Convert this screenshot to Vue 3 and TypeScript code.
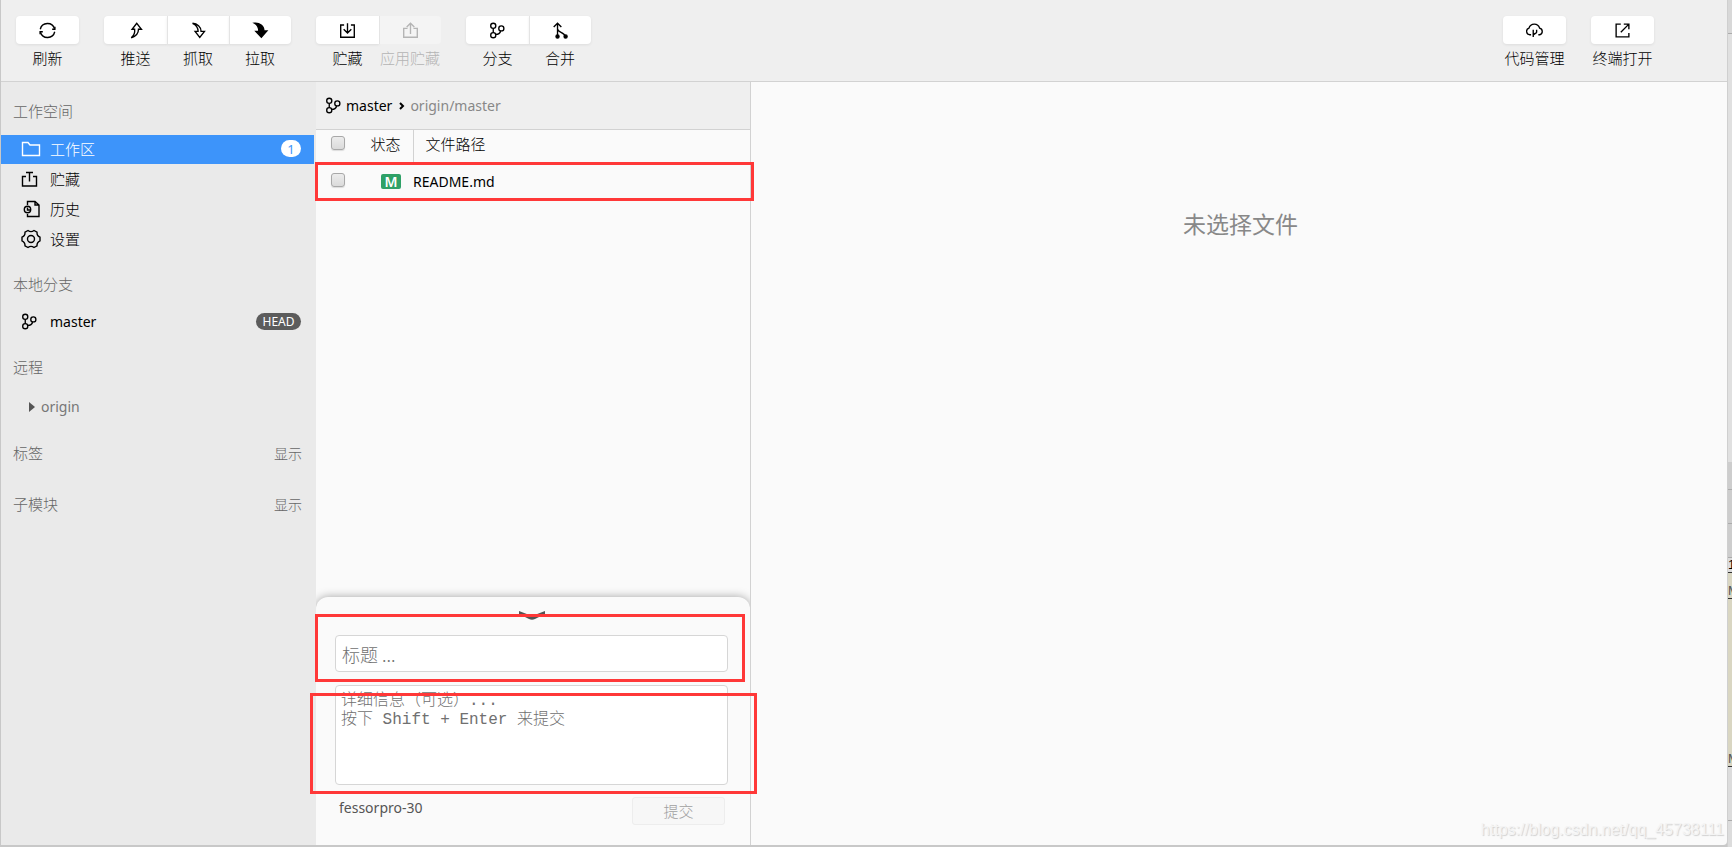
<script setup lang="ts">
import { ref } from 'vue'

interface Tool {
  icon: string
  label: string
  disabled?: boolean
}

const leftTools: Tool[][] = [
  [{ icon: 'refresh', label: '刷新' }],
  [
    { icon: 'push', label: '推送' },
    { icon: 'fetch', label: '抓取' },
    { icon: 'pull', label: '拉取' },
  ],
  [
    { icon: 'stash', label: '贮藏' },
    { icon: 'unstash', label: '应用贮藏', disabled: true },
  ],
  [
    { icon: 'branch', label: '分支' },
    { icon: 'merge', label: '合并' },
  ],
]
const rightTools: Tool[][] = [
  [{ icon: 'cloud', label: '代码管理' }],
  [{ icon: 'external', label: '终端打开' }],
]

const workspace = [
  { icon: 'folder', label: '工作区', count: 1 },
  { icon: 'tray', label: '贮藏', count: 0 },
  { icon: 'history', label: '历史', count: 0 },
  { icon: 'gear', label: '设置', count: 0 },
]
const active = ref('工作区')
const files = [{ status: 'M', path: 'README.md' }]
const title = ref('')
const detail = ref('')
</script>

<template>
  <svg class="sprite" aria-hidden="true">
    <defs>
      <symbol id="refresh" viewBox="0 0 20 20">
        <path d="M1.500 8.500A8.700 8.700 0 0 1 18.300 8M18.500 11.500A8.700 8.700 0 0 1 1.700 12" />
        <path d="M15.500 8.500h3.200V5.500M4.500 11.500H1.300v3" />
      </symbol>
      <symbol id="push" viewBox="0 0 20 20">
        <path d="M11.500 1.500 6 8.500h3c.5 4-1 7.500-4 10 5-1.500 8.500-5 8.500-10H17Z" />
      </symbol>
      <symbol id="fetch" viewBox="0 0 20 20">
        <path d="M3 1.500c5.500.5 10 4 10 9.500h4l-5.500 7L6 11h3.500c0-4-2-7.500-6.500-9.500Z" />
      </symbol>
      <symbol id="pull" viewBox="0 0 20 20">
        <path class="solid" d="M3 1.500c6-.5 11 3 11 9h3.500l-6.500 7.500L4.500 11H8c0-4-1.500-7.500-5-9.500Z" />
      </symbol>
      <symbol id="stash" viewBox="0 0 20 20">
        <path d="M6 3.500H2v14.500h16V3.500h-4M10 1.500v11.500M5.500 8.500 10 13l4.500-4.500" />
      </symbol>
      <symbol id="unstash" viewBox="0 0 20 20">
        <path d="M6.500 7.500H2v10.500h16V7.500h-4.500M10 14V1.500M5.500 6 10 1.500 14.500 6" />
      </symbol>
      <symbol id="branch" viewBox="0 0 20 20">
        <circle cx="5" cy="4.500" r="3" /><circle cx="5" cy="15.500" r="3" /><circle cx="14.500" cy="7.500" r="3" />
        <path d="M5 7.500v5M8 14.500c3.500 0 5-1.500 5.800-4" />
      </symbol>
      <symbol id="merge" viewBox="0 0 20 20">
        <path d="M6.500 17V1.500M2 6l4.500-4.500L11 6M6.500 8c0 4.500 8 4 9 9" />
        <circle class="solid" cx="6.500" cy="17" r="1.800" /><circle class="solid" cx="16" cy="17" r="1.800" />
      </symbol>
      <symbol id="cloud" viewBox="0 0 20 20">
        <path d="M6 15H4.500A4 4 0 0 1 3.500 7.200a6.500 6.500 0 0 1 12.500 0A4 4 0 0 1 16 15h-1.500" />
        <path d="M8.500 17.500V9M12.500 9v3c0 2-4 1-4 4" />
      </symbol>
      <symbol id="external" viewBox="0 0 20 20">
        <path d="M8 2.500H2.500v15h15V13M8 12l9.500-9.500M11.500 2.500h6v6" />
      </symbol>
      <symbol id="folder" viewBox="0 0 20 20">
        <path d="M1.500 3.500H7l2 2.500h9.500v10.500h-17Z" />
      </symbol>
      <symbol id="tray" viewBox="0 0 20 20">
        <path d="M5 7.500H1.500V17h14V7.500H12M8.500 12.500V4M5 3.500h7" />
      </symbol>
      <symbol id="history" viewBox="0 0 20 20">
        <path d="M6.500 6V2.500H14L18 6v11.500H6.500V15M14 2.500V6h4" />
        <circle cx="6.500" cy="10.500" r="3.200" /><path d="M6.500 8.500v2.500h2.500" />
      </symbol>
      <symbol id="gear" viewBox="0 0 20 20">
        <path d="M7 1.500q3 2.200 6 0l3 1.700q-.2 3.600 3 5v3.600q-3.200 1.400-3 5l-3 1.700q-3-2.200-6 0l-3-1.700q.2-3.600-3-5V8.200q3.200-1.400 3-5Z" />
        <circle cx="10" cy="10" r="3.500" />
      </symbol>
    </defs>
  </svg>

  <div class="desktop">
    <div class="window">
      <header class="toolbar">
        <div
          v-for="(group, gi) in [...leftTools, ...rightTools]"
          :key="gi"
          class="group"
          :class="{ 'push-right': gi === leftTools.length }"
        >
          <button v-for="t in group" :key="t.icon" class="tool" :disabled="t.disabled">
            <span class="tile"><svg class="icon small"><use :href="'#' + t.icon" /></svg></span>
            <span class="tool-label">{{ t.label }}</span>
          </button>
        </div>
      </header>

      <div class="body">
        <nav class="sidebar">
          <h2>工作空间</h2>
          <ul class="menu">
            <li v-for="w in workspace" :key="w.icon">
              <button class="entry" :class="{ active: active === w.label }" @click="active = w.label">
                <svg class="icon"><use :href="'#' + w.icon" /></svg>
                <span>{{ w.label }}</span>
                <span v-if="w.count" class="count">{{ w.count }}</span>
              </button>
            </li>
          </ul>
          <h2 class="local">本地分支</h2>
          <button class="entry latin">
            <svg class="icon small"><use href="#branch" /></svg>
            <span>master</span>
            <span class="head-tag">HEAD</span>
          </button>
          <h2 class="remote">远程</h2>
          <button class="origin latin"><span class="caret"></span>origin</button>
          <div class="section"><h2>标签</h2><button class="show">显示</button></div>
          <div class="section"><h2>子模块</h2><button class="show">显示</button></div>
        </nav>

        <section class="changes">
          <div class="tracking latin">
            <svg class="icon small"><use href="#branch" /></svg>
            <span class="local-name">master</span>
            <svg class="angle" viewBox="0 0 6 8"><path d="m1 1 3 3-3 3" /></svg>
            <span class="remote-name">origin/master</span>
          </div>

          <div class="files">
            <table>
              <thead>
                <tr>
                  <th class="pick"><input type="checkbox" aria-label="全选" /></th>
                  <th class="state">状态</th>
                  <th class="path">文件路径</th>
                </tr>
              </thead>
              <tbody>
                <tr v-for="f in files" :key="f.path">
                  <td class="pick"><input type="checkbox" :aria-label="f.path" /></td>
                  <td class="state"><span class="badge">{{ f.status }}</span></td>
                  <td class="latin">{{ f.path }}</td>
                </tr>
              </tbody>
            </table>
            <span class="mark mark-file"></span>
          </div>

          <form class="commit" @submit.prevent>
            <div class="backdrop"><div class="surface"></div></div>
            <button type="button" class="collapse" aria-label="收起">
              <svg viewBox="0 0 28 9"><path d="M1 0 14 5 27 0v3L17 8q-3 1.500-6 0L1 3Z" /></svg>
            </button>
            <div class="field">
              <input v-model="title" class="title" type="text" placeholder="标题 ..." aria-label="标题" />
              <span class="mark mark-title"></span>
            </div>
            <div class="field">
              <textarea
                v-model="detail"
                class="detail"
                aria-label="详细信息"
                placeholder="详细信息（可选）...&#10;按下 Shift + Enter 来提交"
              ></textarea>
              <span class="mark mark-detail"></span>
            </div>
            <div class="footer">
              <span class="author latin">fessorpro-30</span>
              <button class="submit" disabled>提交</button>
            </div>
          </form>
        </section>

        <main class="viewer">
          <p class="empty">未选择文件</p>
          <span class="watermark">https://blog.csdn.net/qq_45738111</span>
        </main>
      </div>
    </div>

    <div class="behind">
      <div class="strip top"></div>
      <div class="strip plain"></div>
      <div class="strip dark"></div>
      <div class="strip dark"></div>
      <div class="strip dark"></div>
      <div class="strip link">1</div>
      <div class="strip sand first">M</div>
      <div class="strip sand">M</div>
      <div class="strip tail"></div>
      <div class="strip rest"></div>
    </div>
  </div>
</template>

<style>
html,
body,
#app {
  height: 100%;
}
</style>

<style scoped>
* {
  box-sizing: border-box;
}
button,
input,
textarea {
  font: inherit;
  color: inherit;
  margin: 0;
}
button {
  padding: 0;
  border: 0;
  background: none;
}
.sprite {
  position: absolute;
  width: 0;
  height: 0;
}
.icon {
  width: 20px;
  height: 20px;
  flex: none;
  fill: none;
  stroke: currentColor;
  stroke-width: 1.4;
}
.icon.small {
  width: 17px;
  height: 17px;
  stroke-width: 1.6;
}
.solid {
  fill: currentColor;
}
.desktop {
  display: flex;
  min-height: 100vh;
  padding-left: 1px;
  background: #c8c8c8;
  font: 300 15px/20px 'Noto Sans CJK SC', 'Noto Sans', sans-serif;
  color: #000;
}
.latin {
  font: 400 14px/20px 'Noto Sans', sans-serif;
}
.window {
  flex: 1;
  min-width: 0;
  display: flex;
  flex-direction: column;
  margin-bottom: 2px;
  background: #fafafa;
  border-radius: 0 0 4px 0;
  overflow: hidden;
}
.toolbar {
  display: flex;
  gap: 25px;
  padding: 16px 73px 13px 15px;
  border-bottom: 1px solid #d2d2d2;
  background: #efefef;
}
.group {
  display: flex;
}
.push-right {
  margin-left: auto;
}
.tool {
  width: 62px;
  display: flex;
  flex-direction: column;
  gap: 4px;
}
.tool:first-child {
  width: 63px;
}
.tile {
  width: 100%;
  height: 28px;
  display: flex;
  align-items: center;
  justify-content: center;
  background: #fff;
  box-shadow: 0 1px 3px rgba(0, 0, 0, 0.08);
}
.tool + .tool .tile {
  border-left: 1px solid #e4e4e4;
}
.tool:first-child .tile {
  border-radius: 4px 0 0 4px;
}
.tool:last-child .tile {
  border-radius: 0 4px 4px 0;
}
.tool:only-child .tile {
  border-radius: 4px;
}
.tool:disabled {
  color: #b4b4b4;
}
.tool:disabled .tile {
  background: #f4f4f4;
  box-shadow: none;
}
.tool-label {
  width: 100%;
  text-align: center;
  white-space: nowrap;
}
.body {
  flex: 1;
  display: flex;
}
.sidebar {
  width: 315px;
  flex: none;
  padding-top: 19px;
  background: #eaeaea;
}
h2 {
  margin: 0;
  padding-left: 12px;
  font-size: 15px;
  font-weight: 300;
  color: #666;
}
.menu {
  list-style: none;
  margin: 14px 0 20px;
  padding: 0;
  display: grid;
  gap: 1px;
}
.entry {
  display: flex;
  align-items: center;
  width: 313px;
  height: 29px;
  padding: 0 13px 2px 20px;
  text-align: left;
}
.entry .icon {
  margin-right: 9px;
}
.entry .icon.small {
  margin-right: 12px;
}
.entry.active {
  background: #3d94fa;
  color: #fff;
}
.count,
.head-tag {
  margin-left: auto;
  height: 17px;
  border-radius: 9px;
  font: 400 13px/18px 'Noto Sans', sans-serif;
  text-align: center;
}
.count {
  width: 20px;
  background: #fff;
  color: #3d94fa;
}
.head-tag {
  width: 45px;
  background: #5c5c5c;
  color: #fff;
  font-size: 12px;
}
.local {
  margin-bottom: 14px;
}
.remote {
  margin: 20px 0;
}
.origin {
  display: flex;
  align-items: center;
  gap: 6px;
  padding-left: 28px;
  margin-bottom: 26px;
  color: #777;
}
.caret {
  border: 5px solid transparent;
  border-left: 6px solid #555;
  border-right: 0;
}
.section {
  display: flex;
  justify-content: space-between;
  padding-right: 14px;
  margin-bottom: 31px;
}
.show {
  font-size: 14px;
  color: #666;
}
.changes {
  width: 435px;
  flex: none;
  display: flex;
  flex-direction: column;
  border-right: 1px solid #d2d2d2;
  background: #fafafa;
}
.tracking {
  display: flex;
  align-items: center;
  height: 48px;
  padding-left: 9px;
  border-bottom: 1px solid #d2d2d2;
  background: #efefef;
}
.local-name {
  margin-left: 4px;
}
.angle {
  width: 6px;
  height: 8px;
  margin: 0 5px 0 7px;
  fill: none;
  stroke: #000;
  stroke-width: 2;
}
.remote-name {
  color: #888;
}
.files,
.field,
.commit {
  position: relative;
}
table {
  width: 100%;
  border-collapse: collapse;
  table-layout: fixed;
}
th,
td {
  padding: 0 0 2px;
  height: 38px;
  font-weight: 300;
  text-align: left;
}
td.latin {
  font-weight: 400;
  padding: 0;
}
th {
  height: 33px;
  padding-bottom: 6px;
}
.pick {
  width: 39px;
  padding-left: 15px;
}
td.pick {
  padding-bottom: 4px;
}
th.pick {
  padding-bottom: 8px;
}
.state {
  width: 58px;
  text-align: right;
  padding-right: 12px;
}
th.path {
  padding-left: 12px;
  border-left: 1px solid #d2d2d2;
}
input[type='checkbox'] {
  appearance: none;
  display: block;
  width: 14px;
  height: 14px;
  border: 1px solid #a8a8a8;
  border-radius: 3px;
  background: linear-gradient(#ececec, #dadada);
  box-shadow: 0 1px 1px rgba(0, 0, 0, 0.12);
}
.badge {
  display: inline-block;
  width: 20px;
  height: 15px;
  border-radius: 2px;
  background: #2fa167;
  color: #fff;
  font: 600 14px/15px 'Noto Sans', sans-serif;
  text-align: center;
}
.mark {
  position: absolute;
  z-index: 2;
  border: 3px solid #ff3838;
  pointer-events: none;
}
.mark-file {
  inset: 32px -4px 0 -1px;
}
.mark-title {
  inset: -21px -17px -10px -20px;
}
.mark-detail {
  inset: 8px -29px -9px -25px;
}
.commit {
  margin-top: auto;
  padding: 14px 22px 20px 19px;
}
.backdrop {
  position: absolute;
  inset: -16px 0 0;
  padding-top: 16px;
  overflow: hidden;
}
.surface {
  height: 100%;
  border-radius: 12px 12px 0 0;
  background: #fafafa;
  box-shadow: 0 0 10px rgba(0, 0, 0, 0.35);
}
.collapse {
  position: relative;
  display: block;
  margin: 0 auto 15px;
  height: 9px;
}
.collapse svg {
  display: block;
  width: 28px;
  height: 9px;
  fill: #555;
}
.title,
.detail {
  display: block;
  width: 100%;
  border: 1px solid #d6d6d6;
  border-radius: 4px;
  background: #fff;
  outline: 0;
}
.title {
  height: 37px;
  padding: 0 6px;
  margin-bottom: 13px;
  font-size: 18px;
}
.detail {
  height: 100px;
  padding: 6px 5px;
  resize: none;
  font: 300 16px/19px 'Liberation Mono', 'Noto Sans CJK SC', monospace;
}
::placeholder {
  color: #707070;
  opacity: 1;
}
.footer {
  position: relative;
  display: flex;
  justify-content: space-between;
  padding: 12px 3px 0 4px;
}
.author {
  line-height: 22px;
  color: #555;
}
.submit {
  width: 93px;
  height: 28px;
  border: 1px solid #ededed;
  border-radius: 3px;
  background: #f7f7f7;
  color: #a0a0a0;
}
.viewer {
  flex: 1;
  display: flex;
  flex-direction: column;
  justify-content: space-between;
  padding: 126px 3px 5px 6px;
}
.empty {
  margin: 0;
  font-size: 23px;
  font-weight: 400;
  line-height: 30px;
  text-align: center;
  color: #888;
}
.watermark {
  align-self: flex-end;
  font: 16px/20px 'Liberation Sans', sans-serif;
  color: #f4f4f4;
  text-shadow: 1px 1px 1px #d0d0d0;
}
.behind {
  width: 5px;
  flex: none;
  display: flex;
  flex-direction: column;
  border-left: 1px solid #cfcfcf;
  overflow: hidden;
  background: #dcdcdc;
}
.strip {
  flex: none;
  height: 34px;
  border-bottom: 1px solid #ababab;
  overflow: hidden;
  font: 400 13px/14px 'Liberation Sans', sans-serif;
}
.top {
  background: #d8d8d8;
}
.plain {
  height: 428px;
  border: 0;
  background: #e0e0e0;
}
.dark {
  background: #cdcdcd;
}
.dark:nth-child(3) {
  height: 28px;
}
.link {
  height: 15px;
  border-color: #333;
}
.sand {
  height: 168px;
  padding-top: 153px;
  background: #d9d6c2;
  border-color: #333;
  color: #555;
}
.first {
  height: 26px;
  padding-top: 11px;
}
.tail {
  height: 54px;
  background: #dcdcdc;
}
.rest {
  flex: 1;
  border: 0;
}
</style>
